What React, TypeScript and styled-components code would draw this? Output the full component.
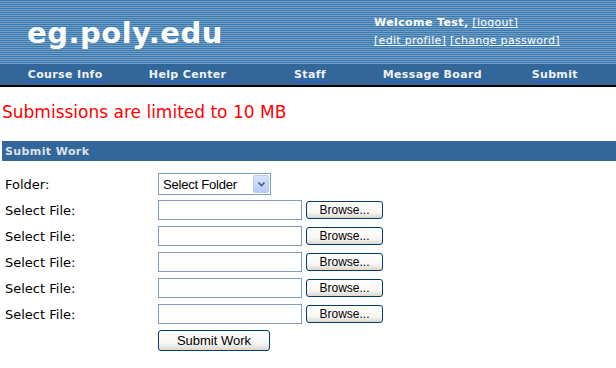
import React from 'react';
import styled, { createGlobalStyle } from 'styled-components';

const GlobalStyle = createGlobalStyle`
  html, body {
    margin: 0;
    padding: 0;
    background: #fff;
  }
  body {
    font-family: "DejaVu Sans", Verdana, sans-serif;
  }
`;

const Page = styled.div`
  width: 616px;
  height: 368px;
  overflow: hidden;
  background: #fff;
`;

const Header = styled.header`
  display: grid;
  grid-template-columns: 374px 1fr;
  height: 64px;
  background: repeating-linear-gradient(
    to bottom,
    #2f7dc0 0px,
    #2f7dc0 1px,
    #7d9bb3 1px,
    #7d9bb3 2px
  );
`;

const SiteTitle = styled.h1`
  margin: 0;
  padding: 19px 0 0 27px;
  font-family: "DejaVu Sans", Verdana, sans-serif;
  font-size: 29px;
  line-height: 28px;
  font-weight: bold;
  letter-spacing: 0.5px;
  color: #fff;
`;

const Welcome = styled.div`
  padding-top: 14px;
  font-size: 11px;
  line-height: 18px;
  letter-spacing: 0.3px;
  color: #fff;

  & strong {
    font-weight: bold;
    letter-spacing: 0.4px;
  }
`;

const HeaderLink = styled.a`
  color: #fff;
  text-decoration: underline;
  cursor: pointer;
`;

const Nav = styled.nav`
  display: grid;
  grid-template-columns: repeat(5, 1fr);
  height: 21px;
  padding-left: 4px;
  background: #336699;
  border-bottom: 2px solid #000;
`;

const NavItem = styled.a`
  justify-self: center;
  font-size: 11px;
  line-height: 21px;
  font-weight: bold;
  letter-spacing: 0.35px;
  color: #eef2f8;
  text-decoration: underline;
  text-decoration-color: #2f5fd0;
  text-underline-offset: 2px;
  cursor: pointer;
`;

const Content = styled.main`
  padding-left: 2px;
`;

const Notice = styled.p`
  margin: 15px 0 19px;
  font-size: 17px;
  line-height: 20px;
  color: #ff0000;
`;

const SectionBar = styled.div`
  height: 20px;
  padding: 1px 0 0 3px;
  box-sizing: border-box;
  background: #336699;
  font-size: 11px;
  line-height: 20px;
  font-weight: bold;
  letter-spacing: 0.4px;
  color: #dde3ec;
`;

const Form = styled.form`
  display: grid;
  grid-template-columns: 153px auto;
  grid-auto-rows: 26px;
  align-items: center;
  margin-top: 10px;
  padding-left: 3px;
`;

const Label = styled.label`
  font-size: 13px;
  color: #000;
`;

const Controls = styled.div`
  display: flex;
  align-items: center;
  gap: 4px;
`;

const FolderSelect = styled.div`
  display: flex;
  align-items: center;
  justify-content: space-between;
  width: 113px;
  height: 22px;
  box-sizing: border-box;
  padding: 1px 1px 1px 4px;
  border: 1px solid #7f9db9;
  background: #fff;
  font-family: "Liberation Sans", Arial, sans-serif;
  font-size: 13px;
  letter-spacing: -0.2px;
  color: #000;
`;

const SelectArrow = styled.span`
  display: flex;
  align-items: center;
  justify-content: center;
  width: 16px;
  height: 18px;
  box-sizing: border-box;
  border: 1px solid #b8cdf6;
  border-radius: 2px;
  background: linear-gradient(to bottom, #d8e4fd, #b6cbf7);
`;

const FileInput = styled.input`
  width: 144px;
  height: 20px;
  box-sizing: border-box;
  margin: 0;
  border: 1px solid #7f9db9;
  background: #fff;
  padding: 0 2px;
`;

const XPButton = styled.button<{ $width: number; $height: number; $size: number }>`
  width: ${(p) => p.$width}px;
  height: ${(p) => p.$height}px;
  box-sizing: border-box;
  margin: 0;
  padding: 0;
  border: 1px solid #003c74;
  border-radius: 3px;
  background: linear-gradient(to bottom, #ffffff 0%, #f7f6f2 65%, #dcd7cd 100%);
  font-family: "Liberation Sans", Arial, sans-serif;
  font-size: ${(p) => p.$size}px;
  line-height: 1;
  color: #000;
  cursor: pointer;
`;

const Chevron = () => (
  <svg width="7" height="5" viewBox="0 0 7 5">
    <path d="M0.5 0.5 L3.5 3.5 L6.5 0.5" fill="none" stroke="#4d6185" strokeWidth="1.6" />
  </svg>
);

const navItems = ['Course Info', 'Help Center', 'Staff', 'Message Board', 'Submit'];

const FileRow = () => (
  <>
    <Label>Select File:</Label>
    <Controls>
      <FileInput type="text" />
      <XPButton type="button" $width={77} $height={18} $size={12}>
        Browse...
      </XPButton>
    </Controls>
  </>
);

const App = (): JSX.Element => (
  <Page>
    <GlobalStyle />
    <Header>
      <SiteTitle>eg.poly.edu</SiteTitle>
      <Welcome>
        <div>
          <strong>Welcome Test,</strong> <HeaderLink>[logout]</HeaderLink>
        </div>
        <div>
          <HeaderLink>[edit profile]</HeaderLink> <HeaderLink>[change password]</HeaderLink>
        </div>
      </Welcome>
    </Header>
    <Nav>
      {navItems.map((item) => (
        <NavItem key={item}>{item}</NavItem>
      ))}
    </Nav>
    <Content>
      <Notice>Submissions are limited to 10 MB</Notice>
      <SectionBar>Submit Work</SectionBar>
      <Form>
        <Label>Folder:</Label>
        <Controls>
          <FolderSelect role="combobox">
            <span>Select Folder</span>
            <SelectArrow>
              <Chevron />
            </SelectArrow>
          </FolderSelect>
        </Controls>
        <FileRow />
        <FileRow />
        <FileRow />
        <FileRow />
        <FileRow />
        <span />
        <Controls>
          <XPButton type="submit" $width={112} $height={21} $size={13}>
            Submit Work
          </XPButton>
        </Controls>
      </Form>
    </Content>
  </Page>
);

export default App;
